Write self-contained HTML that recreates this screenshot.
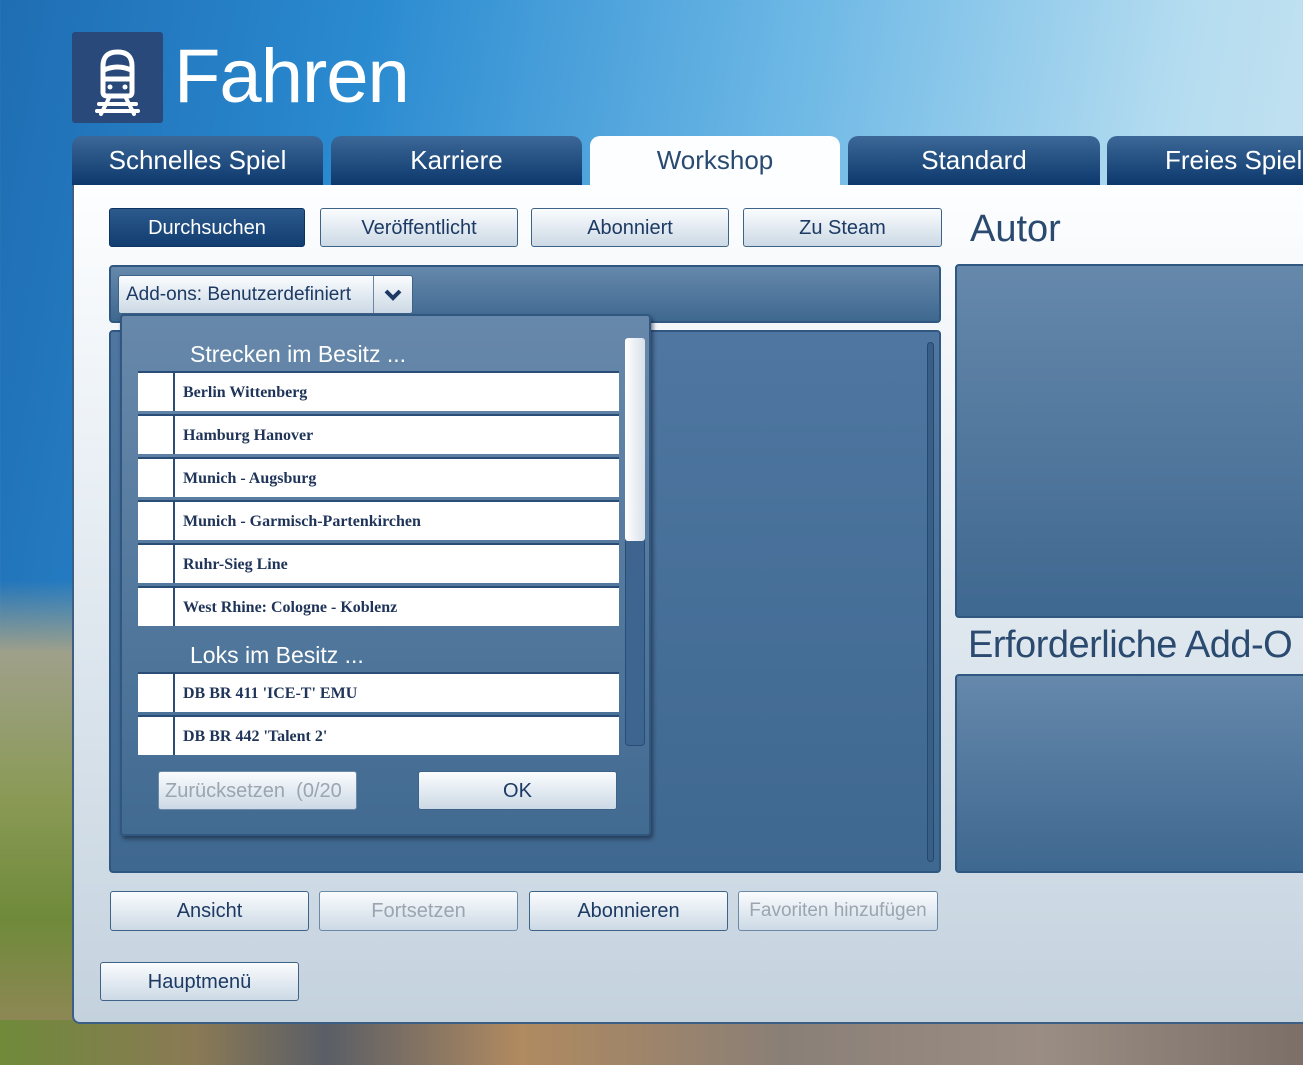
<!DOCTYPE html>
<html><head><meta charset="utf-8">
<style>
*{box-sizing:border-box;margin:0;padding:0}
body{width:1303px;height:1065px;overflow:hidden;position:relative;font-family:"Liberation Sans",sans-serif;
background:linear-gradient(100deg,#1f6db3 0%,#2a8ad0 25%,#6fb9e6 55%,#b4dcf0 80%,#cfe6f2 100%);}
.land{position:absolute;left:0;top:580px;width:90px;height:485px;background:linear-gradient(180deg,rgba(160,150,120,0) 0,#9fa08a 15%,#8a9a55 45%,#6f8a3a 70%,#9a8660 100%)}
.ground{position:absolute;left:0;top:1020px;width:1303px;height:45px;background:linear-gradient(90deg,#6f8a3a 0,#8a7a55 15%,#5a5e66 25%,#b08a60 40%,#8a7f76 60%,#9a8d84 80%,#7b6f67 100%)}
.abs{position:absolute}
.logo{left:72px;top:32px;width:91px;height:91px;background:#28497a;border-radius:3px}
.title{left:174px;top:32px;font-size:76px;color:#fff;letter-spacing:-1px;line-height:90px}
.tab{position:absolute;top:136px;height:50px;border-radius:10px 10px 0 0;background:linear-gradient(180deg,#3c6898,#0c376b);color:#fff;font-size:26px;text-align:center;line-height:48px}
.tab.act{background:#fdfeff;color:#2a4a70;height:52px}
.panel{left:72px;top:185px;width:1250px;height:839px;border:2px solid #3d5f84;border-top:none;border-radius:0 0 0 8px;background:linear-gradient(180deg,#fdfeff 0,#e6edf3 40%,#c4d2de 100%)}
.btn{position:absolute;height:39px;border:1.5px solid #3e6389;border-radius:3px;background:linear-gradient(180deg,#fafcfe,#ccd9e5);color:#1c3a63;font-size:20px;text-align:center;line-height:38px;white-space:nowrap;overflow:hidden}
.btn.dis{color:#9aa5b0;border-color:#6a8aa8}
.btn.dark{background:linear-gradient(180deg,#2d5a8c,#113d70);color:#fff;border-color:#0e3262}
.blue{position:absolute;border:2px solid #2f5780;border-radius:4px;background:linear-gradient(180deg,#6588ab,#3f6890)}
.popup{left:120px;top:314px;width:531px;height:522px;border:2px solid #2f5780;border-radius:4px;background:linear-gradient(180deg,#6788aa,#426b92);box-shadow:2px 3px 4px rgba(20,30,50,.6)}
.h{position:absolute;left:190px;color:#fff;font-size:23px}
.row{position:absolute;left:138px;width:481px;height:40px;background:#fff;border-top:2px solid #2a4d78;font-family:"Liberation Serif",serif;font-weight:bold;color:#1f3458;font-size:16px;line-height:40px}
.row:before{content:"";position:absolute;left:35px;top:0;width:2px;height:38px;background:#2a4d78}
.row span{position:absolute;left:45px}
.lab{position:absolute;color:#2a4a70;font-size:38px;white-space:nowrap}
</style></head><body>
<div class="land"></div><div class="ground"></div>
<div class="abs logo">
<svg width="91" height="91" viewBox="0 0 91 91"><g fill="none" stroke="#fff" stroke-width="5" stroke-linecap="round">
<path d="M31 60 V34 Q31 20 45.5 20 Q60 20 60 34 V60 Q60 64 56 64 H35 Q31 64 31 60Z"/>
<path d="M32 38 Q45.5 32 59 38"/><path d="M33 47 H58"/>
<path d="M37 66 L29 82 M54 66 L62 82 M27 72 H64 M25 79 H66" stroke-width="4"/></g>
<circle cx="38" cy="55" r="2.5" fill="#fff"/><circle cx="53" cy="55" r="2.5" fill="#fff"/></svg>
</div>
<div class="abs title">Fahren</div>
<div class="tab" style="left:72px;width:251px">Schnelles Spiel</div>
<div class="tab" style="left:331px;width:251px">Karriere</div>
<div class="tab act" style="left:590px;width:250px">Workshop</div>
<div class="tab" style="left:848px;width:252px">Standard</div>
<div class="tab" style="left:1107px;width:220px;text-align:left;padding-left:58px">Freies Spiel</div>
<div class="abs panel"></div>
<div class="btn dark" style="left:109px;top:208px;width:196px">Durchsuchen</div>
<div class="btn" style="left:320px;top:208px;width:198px">Veröffentlicht</div>
<div class="btn" style="left:531px;top:208px;width:198px">Abonniert</div>
<div class="btn" style="left:743px;top:208px;width:199px">Zu Steam</div>
<div class="lab" style="left:970px;top:208px">Autor</div>
<div class="blue" style="left:955px;top:264px;width:360px;height:354px"></div>
<div class="lab" style="left:968px;top:624px;letter-spacing:-0.5px">Erforderliche Add-O</div>
<div class="blue" style="left:955px;top:674px;width:360px;height:199px"></div>
<div class="blue" style="left:109px;top:265px;width:832px;height:58px"></div>
<div class="blue" style="left:109px;top:330px;width:832px;height:543px;background:linear-gradient(180deg,#4e76a0,#3f6890)"></div>
<div class="abs" style="left:927px;top:342px;width:7px;height:520px;border-radius:4px;background:#3a5f86;border:1px solid #254870"></div>
<div class="btn" style="left:118px;top:275px;width:295px;height:39px;text-align:left;padding-left:7px;color:#1c3a63;font-size:19px">Add-ons: Benutzerdefiniert
<div class="abs" style="left:254px;top:0;width:1px;height:39px;background:#6c86a2"></div>
<svg class="abs" style="left:264px;top:12px" width="20" height="14"><path d="M3 3 L10 10 L17 3" fill="none" stroke="#1c3a63" stroke-width="4"/></svg></div>
<div class="abs popup"></div>
<div class="abs" style="left:625px;top:338px;width:20px;height:408px;border-radius:4px;background:#3d6590;border:1px solid #2a4d78"></div>
<div class="abs" style="left:625px;top:338px;width:20px;height:203px;border-radius:3px;background:linear-gradient(90deg,#fff,#d7e0ea)"></div>
<div class="h" style="top:341px">Strecken im Besitz ...</div>
<div class="row" style="top:371px"><span>Berlin Wittenberg</span></div>
<div class="row" style="top:414px"><span>Hamburg Hanover</span></div>
<div class="row" style="top:457px"><span>Munich - Augsburg</span></div>
<div class="row" style="top:500px"><span>Munich - Garmisch-Partenkirchen</span></div>
<div class="row" style="top:543px"><span>Ruhr-Sieg Line</span></div>
<div class="row" style="top:586px"><span>West Rhine: Cologne - Koblenz</span></div>
<div class="h" style="top:642px">Loks im Besitz ...</div>
<div class="row" style="top:672px"><span>DB BR 411 'ICE-T' EMU</span></div>
<div class="row" style="top:715px"><span>DB BR 442 'Talent 2'</span></div>
<div class="btn dis" style="left:158px;top:771px;width:199px;text-align:left;padding-left:6px;font-size:20px">Zurücksetzen &nbsp;(0/20</div>
<div class="btn" style="left:418px;top:771px;width:199px">OK</div>
<div class="btn" style="left:110px;top:891px;width:199px;height:40px">Ansicht</div>
<div class="btn dis" style="left:319px;top:891px;width:199px;height:40px">Fortsetzen</div>
<div class="btn" style="left:529px;top:891px;width:199px;height:40px">Abonnieren</div>
<div class="btn dis" style="left:738px;top:891px;width:200px;height:40px;font-size:19px">Favoriten hinzufügen</div>
<div class="btn" style="left:100px;top:962px;width:199px;height:39px">Hauptmenü</div>
</body></html>
